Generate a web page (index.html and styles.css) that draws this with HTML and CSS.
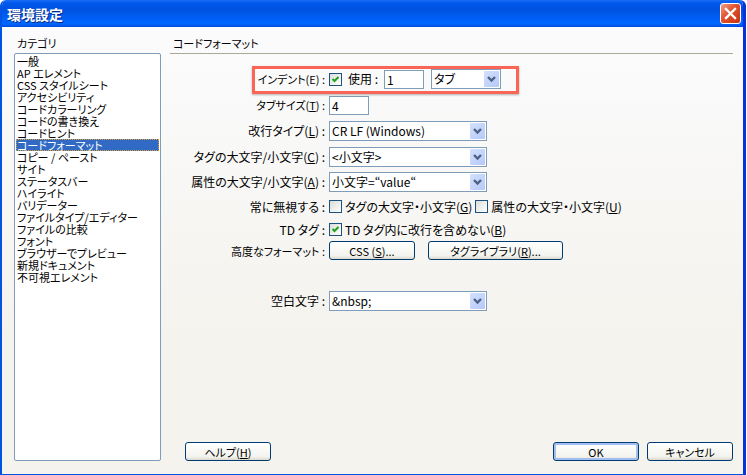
FILE: index.html
```
<!DOCTYPE html>
<html lang="ja">
<head>
    <meta charset="UTF-8">
    <meta name="viewport" content="width=device-width, initial-scale=1.0">
    <title>環境設定</title>
    <link rel="stylesheet" href="styles.css">
</head>
<body>
    <div class="dialog">
        <div class="titlebar">
            <h1>環境設定</h1>
            <button class="close-btn" type="button" aria-label="閉じる">
                <svg width="21" height="21" viewBox="0 0 21 21">
                    <path d="M6 6L15 15M15 6L6 15" stroke="#fff" stroke-width="2.4" stroke-linecap="square"/>
                </svg>
            </button>
        </div>

        <form class="content">
            <div class="sidebar">
                <label for="category">カテゴリ</label>
                <select id="category" class="category-list" size="20">
                    <option>一般</option>
                    <option>AP エレメント</option>
                    <option>CSS スタイルシート</option>
                    <option>アクセシビリティ</option>
                    <option>コードカラーリング</option>
                    <option>コードの書き換え</option>
                    <option>コードヒント</option>
                    <option selected>コードフォーマット</option>
                    <option>コピー / ペースト</option>
                    <option>サイト</option>
                    <option>ステータスバー</option>
                    <option>ハイライト</option>
                    <option>バリデーター</option>
                    <option>ファイルタイプ/エディター</option>
                    <option>ファイルの比較</option>
                    <option>フォント</option>
                    <option>ブラウザーでプレビュー</option>
                    <option>新規ドキュメント</option>
                    <option>不可視エレメント</option>
                </select>
            </div>

            <div class="panel">
                <h2>コードフォーマット</h2>

                <div class="settings">
                    <div class="row row-tall highlight">
                        <label class="name kana" for="indent">インデント(E) :</label>
                        <input type="checkbox" id="indent" checked>
                        <label class="use" for="indent-size">使用 :</label>
                        <input type="text" id="indent-size" class="short" value="1">
                        <span class="combo combo-small">
                            <select aria-label="インデントの単位"><option>タブ</option></select>
                            <svg class="arrow" viewBox="0 0 15 16"><path d="M4 6L7.500 9.500L11 6" /></svg>
                        </span>
                    </div>

                    <div class="row row-tall">
                        <label class="name kana" for="tab-size">タブサイズ(<u>T</u>) :</label>
                        <input type="text" id="tab-size" class="short" value="4">
                    </div>

                    <div class="row row-tall">
                        <label class="name" for="line-break">改行タイプ(<u>L</u>) :</label>
                        <span class="combo">
                            <select id="line-break"><option>CR LF (Windows)</option></select>
                            <svg class="arrow" viewBox="0 0 15 16"><path d="M4 6L7.500 9.500L11 6" /></svg>
                        </span>
                    </div>

                    <div class="row">
                        <label class="name" for="tag-case">タグの大文字/小文字(<u>C</u>) :</label>
                        <span class="combo">
                            <select id="tag-case"><option>&lt;小文字&gt;</option></select>
                            <svg class="arrow" viewBox="0 0 15 16"><path d="M4 6L7.500 9.500L11 6" /></svg>
                        </span>
                    </div>

                    <div class="row">
                        <label class="name" for="attr-case">属性の大文字/小文字(<u>A</u>) :</label>
                        <span class="combo">
                            <select id="attr-case"><option>小文字=“value“</option></select>
                            <svg class="arrow" viewBox="0 0 15 16"><path d="M4 6L7.500 9.500L11 6" /></svg>
                        </span>
                    </div>

                    <div class="row">
                        <span class="name">常に無視する :</span>
                        <input type="checkbox" id="ignore-tag">
                        <label class="check-label" for="ignore-tag">タグの大文字・小文字(<u>G</u>)</label>
                        <input type="checkbox" id="ignore-attr">
                        <label class="check-label" for="ignore-attr">属性の大文字・小文字(<u>U</u>)</label>
                    </div>

                    <div class="row row-tight">
                        <span class="name">TD タグ :</span>
                        <input type="checkbox" id="td-tag" checked>
                        <label class="check-label" for="td-tag">TD タグ内に改行を含めない(<u>B</u>)</label>
                    </div>

                    <div class="row row-tight">
                        <span class="name kana">高度なフォーマット :</span>
                        <button type="button" class="btn">CSS (<u>S</u>)...</button>
                        <button type="button" class="btn btn-wide">タグライブラリ(<u>R</u>)...</button>
                    </div>

                    <div class="row row-last">
                        <label class="name" for="whitespace">空白文字 :</label>
                        <span class="combo">
                            <select id="whitespace"><option>&amp;nbsp;</option></select>
                            <svg class="arrow" viewBox="0 0 15 16"><path d="M4 6L7.500 9.500L11 6" /></svg>
                        </span>
                    </div>
                </div>

                <div class="footer">
                    <button type="button" class="btn btn-help">ヘルプ(<u>H</u>)</button>
                    <button type="submit" class="btn btn-default">OK</button>
                    <button type="button" class="btn">キャンセル</button>
                </div>
            </div>
        </form>
    </div>
</body>
</html>
```
FILE: styles.css
```
*, *::after {
    margin: 0;
    padding: 0;
    box-sizing: border-box;
}

body {
    background: #fff;
    padding-right: 1px;
}

body, input, select, button {
    font-family: "Noto Sans CJK JP", sans-serif;
    font-size: 12px;
    font-feature-settings: "palt";
    line-height: 16px;
    color: #000;
}

u {
    text-underline-offset: 1px;
}

.dialog {
    display: flex;
    flex-direction: column;
    min-height: 100vh;
    border: 0 solid #0054e3;
    border-width: 0 3px 1px 2px;
    border-right-color: #0831d9;
    border-radius: 6px 6px 0 0;
    background: linear-gradient(#fcfcfe, #f4f3ee 70%);
    overflow: hidden;
}

/* title bar */
.titlebar {
    display: flex;
    align-items: center;
    justify-content: space-between;
    height: 27px;
    margin: 0 -3px 0 -2px;
    padding: 0 5px 0 7px;
    background: linear-gradient(#1a6cf0 0, #0058ee 3px, #0052e0 10px, #0062fb 20px, #0066ff 24px, #0048d8 27px);
}

.titlebar h1 {
    font-size: 14px;
    font-weight: 700;
    color: #fff;
    text-shadow: 1px 1px 0 #0a2a80;
}

.close-btn {
    display: flex;
    width: 21px;
    height: 21px;
    border: 1px solid #fff;
    border-radius: 3px;
    background: linear-gradient(135deg, #f0a08a, #e0502c 45%, #c83210);
}

.close-btn svg {
    flex: none;
    margin: -1px;
}

/* layout */
.content {
    flex: 1;
    display: flex;
    gap: 9px;
    padding: 8px 10px 13px 12px;
}

.sidebar {
    display: flex;
    flex-direction: column;
    width: 147px;
}

.sidebar label {
    height: 18px;
    padding-left: 3px;
    font-size: 11px;
}

.category-list {
    flex: 1;
    padding: 1px;
    border: 1px solid #7f9db9;
    background: #fff;
    font-size: 11px;
    overflow: hidden;
    outline: none;
}

.category-list option {
    display: flex;
    align-items: center;
    height: 12px;
    min-height: 12px;
    padding: 0 1px;
}

.category-list option:checked {
    background: linear-gradient(#316ac5, #316ac5);
    -webkit-text-fill-color: #fff;
    outline: 1px dotted #e0a030;
    outline-offset: -1px;
}

.panel {
    flex: 1;
    display: flex;
    flex-direction: column;
}

.panel h2 {
    height: 19px;
    padding-left: 3px;
    border-bottom: 1px solid #aca899;
    font-size: 11px;
    font-weight: 400;
}

.settings {
    padding-top: 12px;
}

.row {
    display: flex;
    align-items: center;
    height: 25px;
}

.row-tall {
    height: 26px;
}

.row-tight {
    height: 21px;
}

.row-last {
    margin-top: 27px;
}

.name {
    width: 155px;
    margin-right: 4px;
    text-align: right;
}

.kana {
    font-size: 11px;
}

/* frame around the indent setting */
.highlight {
    position: relative;
}

.highlight::after {
    content: "";
    position: absolute;
    top: 0;
    left: 82px;
    width: 267px;
    height: 28px;
    border: 3px solid #f96556;
    box-shadow: 0 1px 2px rgba(0, 0, 0, 0.3);
    pointer-events: none;
}

/* controls */
input[type="text"] {
    height: 19px;
    padding: 0 2px;
    border: 1px solid #7f9db9;
    background: #fff;
}

.short {
    width: 40px;
}

.use {
    width: 36px;
    margin-left: 6px;
}

input[type="checkbox"] {
    appearance: none;
    flex: none;
    width: 13px;
    height: 13px;
    border: 1px solid #1c5180;
    background: linear-gradient(135deg, #dcdcd7, #fff);
}

input[type="checkbox"]:checked {
    background: url("data:image/svg+xml,%3Csvg xmlns='http://www.w3.org/2000/svg' viewBox='0 0 11 11'%3E%3Cpath d='M2.500 5L4.500 7L8.500 3' fill='none' stroke='%2321a121' stroke-width='2'/%3E%3C/svg%3E"), linear-gradient(135deg, #dcdcd7, #fff);
}

.check-label {
    margin: 0 3px;
}

.combo {
    position: relative;
    width: 158px;
    height: 20px;
}

.combo-small {
    width: 70px;
    margin-left: 7px;
}

.combo select {
    appearance: none;
    width: 100%;
    height: 20px;
    padding: 0 18px 0 2px;
    border: 1px solid #7f9db9;
    border-radius: 0;
    background: #fff;
}

.arrow {
    position: absolute;
    top: 2px;
    right: 2px;
    width: 15px;
    height: 16px;
    border-radius: 1px;
    background: linear-gradient(135deg, #d4e0fd, #b5c8f8);
    pointer-events: none;
}

.arrow path {
    fill: none;
    stroke: #4d6185;
    stroke-width: 2.4;
}

.btn {
    width: 86px;
    height: 19px;
    border: 1px solid #003c74;
    border-radius: 3px;
    background: linear-gradient(#fff, #f3f3ee 80%, #dcd8cc);
    font-size: 11px;
    line-height: 16px;
}

.btn-wide {
    width: 135px;
    margin-left: 13px;
}

.btn-default {
    box-shadow: inset 0 0 0 2px #a3bff2;
}

.footer {
    display: flex;
    gap: 8px;
    margin-top: auto;
    padding-left: 15px;
}

.btn-help {
    margin-right: auto;
}
```
